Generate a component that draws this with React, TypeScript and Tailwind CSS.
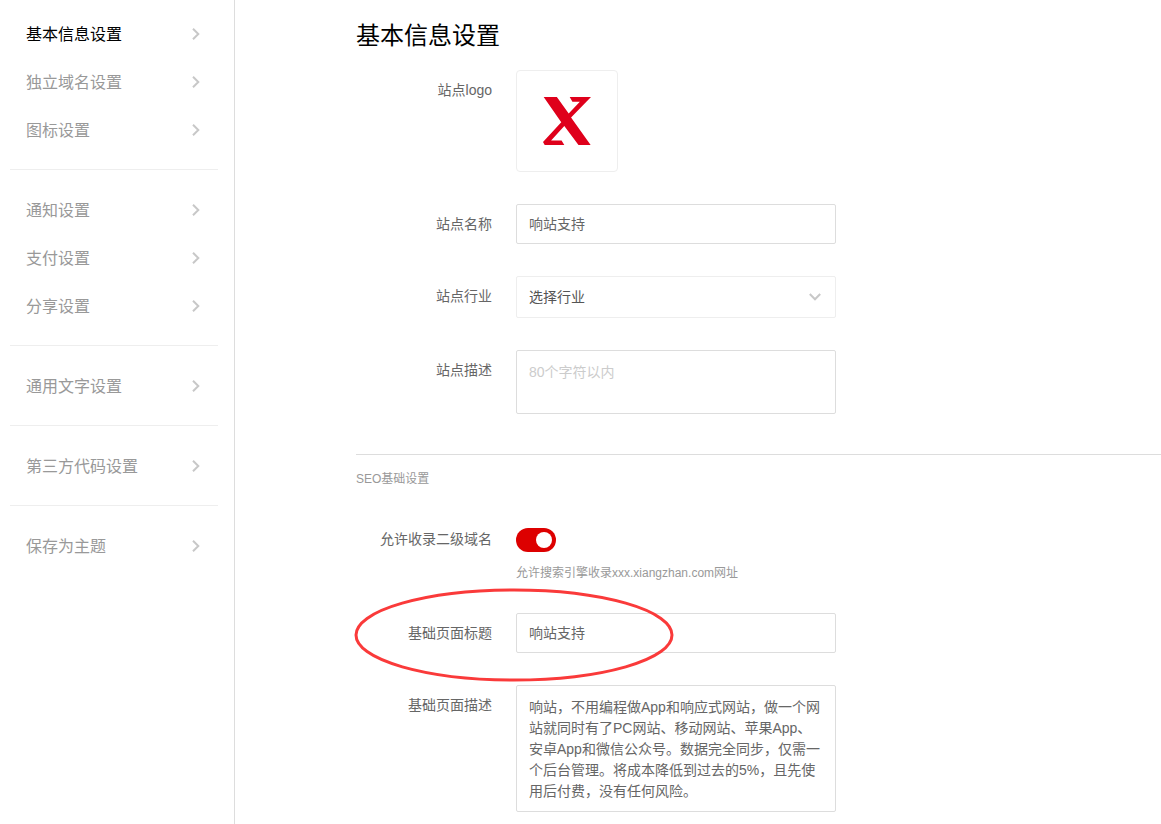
import { useState, type ReactNode } from "react";

const NAV_GROUPS = [
  ["基本信息设置", "独立域名设置", "图标设置"],
  ["通知设置", "支付设置", "分享设置"],
  ["通用文字设置"],
  ["第三方代码设置"],
  ["保存为主题"],
];

const FIELD =
  "block w-full rounded-xs border border-[#ddd] bg-white px-3 text-sm text-[#666] outline-none placeholder:text-[#ccc] focus:border-[#bbb]";
const INPUT = `${FIELD} h-10 pb-0.5`;
const TEXTAREA = `${FIELD} resize-none pt-[11px] pb-[9px] leading-[21px]`;

function Chevron({ className }: { className?: string }) {
  return (
    <svg
      viewBox="0 0 8 12"
      className={className}
      fill="none"
      stroke="#c8c8c8"
      strokeWidth="2"
      aria-hidden="true"
    >
      <path d="M1 0.8 6.3 6 1 11.2" />
    </svg>
  );
}

function SiteLogo() {
  return (
    <svg viewBox="0 0 142 142" className="w-12" fill="#df001b" aria-hidden="true">
      <path d="M2 0H41L76 49 109 14H87L79 0H142L83 61 141 142H105L63 86 24 129H55L63 142H5L0 133 54 75Z" />
    </svg>
  );
}

function Sidebar({ current, onSelect }: { current: string; onSelect: (item: string) => void }) {
  return (
    <nav className="w-[235px] shrink-0 border-r border-[#ddd] pt-2.5 pr-4 pl-2.5">
      {NAV_GROUPS.map((items) => (
        <ul
          key={items[0]}
          className="mb-4 border-b border-[#eee] pb-[15px] last:mb-0 last:border-b-0"
        >
          {items.map((item) => (
            <li key={item}>
              <a
                href="#"
                onClick={() => onSelect(item)}
                className={`flex h-12 items-center justify-between px-4 text-base ${
                  item === current ? "text-black" : "text-[#999]"
                }`}
              >
                <span className="pt-0.5">{item}</span>
                <Chevron className="mr-0.5 h-3 w-2" />
              </a>
            </li>
          ))}
        </ul>
      ))}
    </nav>
  );
}

/** One line of the form: right-aligned label, control in a 320px column. */
function Row({ id, label, children }: { id: string; label: string; children: ReactNode }) {
  return (
    <div className="relative flex gap-6">
      <label htmlFor={id} className="w-[136px] shrink-0 text-right text-sm leading-10 text-[#666]">
        {label}
      </label>
      <div className="w-full max-w-80">{children}</div>
    </div>
  );
}

export default function App() {
  const [current, setCurrent] = useState("基本信息设置");
  const [siteName, setSiteName] = useState("响站支持");
  const [siteDesc, setSiteDesc] = useState("");
  const [indexed, setIndexed] = useState(true);
  const [pageTitle, setPageTitle] = useState("响站支持");
  const [pageDesc, setPageDesc] = useState(
    "响站，不用编程做App和响应式网站，做一个网站就同时有了PC网站、移动网站、苹果App、安卓App和微信公众号。数据完全同步，仅需一个后台管理。将成本降低到过去的5%，且先使用后付费，没有任何风险。"
  );

  return (
    <div
      lang="zh-CN"
      className="flex min-h-screen bg-white font-['Liberation_Sans','Noto_Sans_CJK_SC',sans-serif]"
    >
      <Sidebar current={current} onSelect={setCurrent} />

      <main className="min-w-0 flex-1 pt-5 pb-3 pl-[121px]">
        <h1 className="mb-[18px] text-2xl leading-8 text-black">基本信息设置</h1>

        <section className="flex flex-col gap-8 pb-10">
          <Row id="logo" label="站点logo">
            <button
              id="logo"
              type="button"
              className="flex size-[102px] items-center justify-center rounded-sm border border-[#eee]"
            >
              <SiteLogo />
            </button>
          </Row>
          <Row id="site-name" label="站点名称">
            <input
              id="site-name"
              type="text"
              className={INPUT}
              value={siteName}
              onChange={(e) => setSiteName(e.target.value)}
            />
          </Row>
          <Row id="industry" label="站点行业">
            <div className="relative">
              <select
                id="industry"
                className="block h-[42px] w-full appearance-none rounded-xs border border-[#eee] bg-white px-3 text-sm text-[#555] outline-none"
              >
                <option>选择行业</option>
              </select>
              <Chevron className="pointer-events-none absolute top-[15px] right-[17px] h-3 w-2 rotate-90" />
            </div>
          </Row>
          <Row id="site-desc" label="站点描述">
            <textarea
              id="site-desc"
              rows={2}
              placeholder="80个字符以内"
              className={TEXTAREA}
              value={siteDesc}
              onChange={(e) => setSiteDesc(e.target.value)}
            />
          </Row>
        </section>

        <section className="flex flex-col gap-8 border-t border-[#ddd] pt-4">
          <h2 className="text-xs leading-4 text-[#999]">SEO基础设置</h2>
          <Row id="indexed" label="允许收录二级域名">
            <div className="pt-[9px]">
              <input
                id="indexed"
                type="checkbox"
                role="switch"
                checked={indexed}
                onChange={(e) => setIndexed(e.target.checked)}
                className="flex h-6 w-10 appearance-none items-center rounded-full bg-[#ccc] px-1 before:size-4 before:rounded-full before:bg-white checked:justify-end checked:bg-[#d00]"
              />
              <p className="mt-[13px] text-xs leading-4 text-[#999]">
                允许搜索引擎收录xxx.xiangzhan.com网址
              </p>
            </div>
          </Row>
          <Row id="page-title" label="基础页面标题">
            <input
              id="page-title"
              type="text"
              className={INPUT}
              value={pageTitle}
              onChange={(e) => setPageTitle(e.target.value)}
            />
            {/* red marker around the label and field */}
            <svg
              viewBox="0 0 320 94"
              className="pointer-events-none absolute -top-[25px] -left-0.5 h-[94px] w-80"
              fill="none"
              stroke="#fa3a3a"
              strokeWidth="3"
              aria-hidden="true"
            >
              <ellipse cx="160" cy="47" rx="158" ry="45" />
            </svg>
          </Row>
          <Row id="page-desc" label="基础页面描述">
            <textarea
              id="page-desc"
              rows={5}
              className={TEXTAREA}
              value={pageDesc}
              onChange={(e) => setPageDesc(e.target.value)}
            />
          </Row>
        </section>
      </main>
    </div>
  );
}
